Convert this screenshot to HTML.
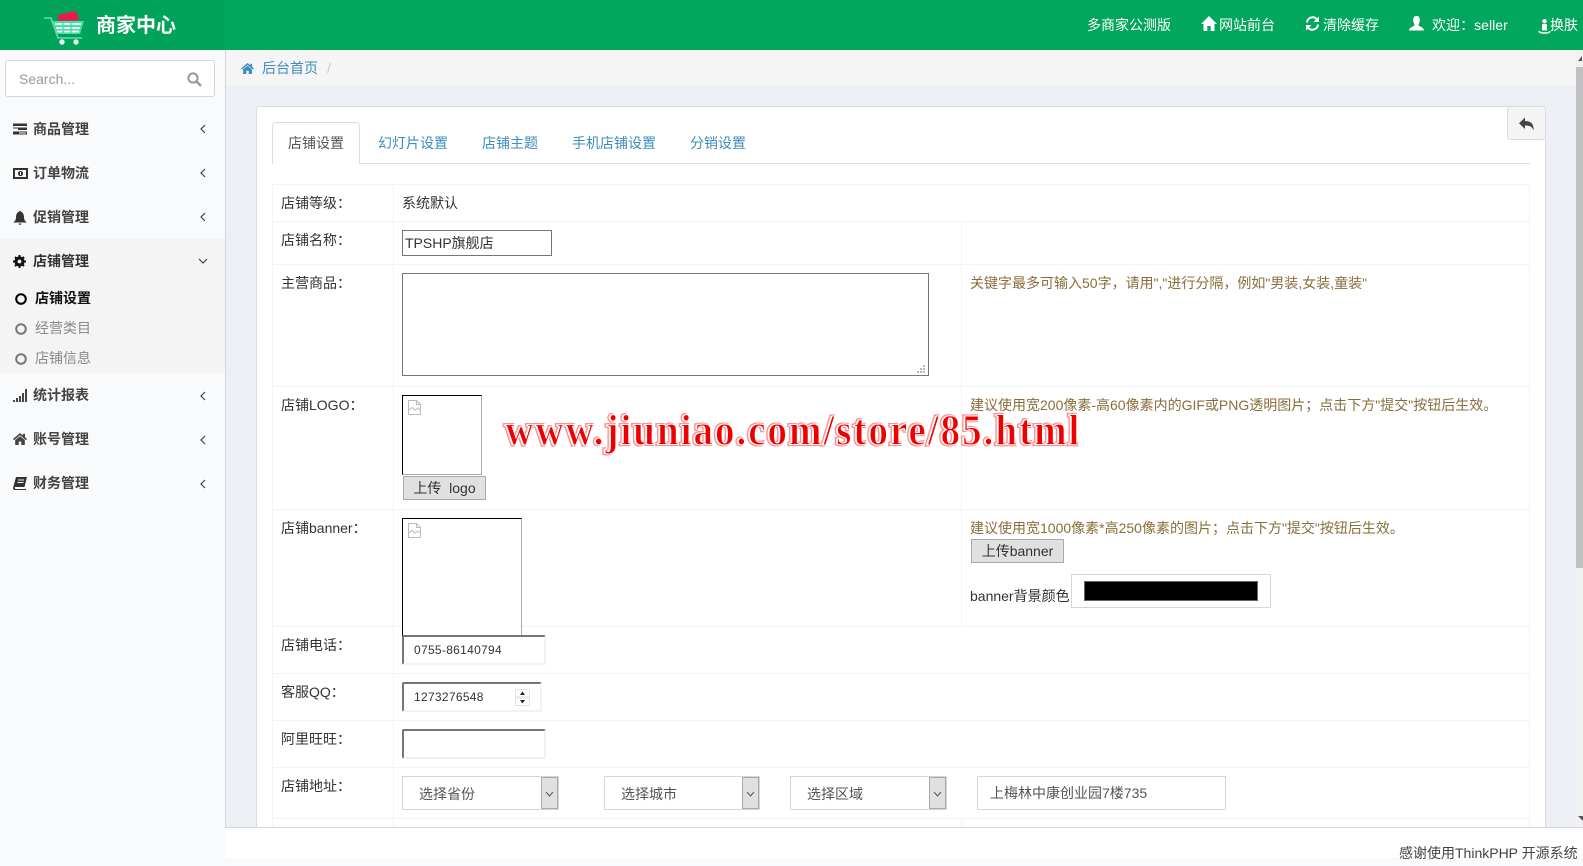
<!DOCTYPE html>
<html lang="zh"><head><meta charset="utf-8"><title>商家中心</title>
<style>
*{box-sizing:border-box}
html,body{margin:0;padding:0;width:1583px;height:866px;overflow:hidden;background:#f9fafc}
body{font:14px/20px "Liberation Sans","Noto Sans CJK SC",sans-serif;color:#333;position:relative}
div,span,svg{position:absolute}
.t{white-space:nowrap;height:20px;line-height:20px}
.m{color:#444;font-weight:bold;left:33px}
.hd{color:#fff}
.hint{color:#8a6d3b;left:970px}
.ln{background:#f4f4f4;height:1px;left:272px;width:1257px}
.vl{background:#f4f4f4;width:1px}
.box{background:#fff;border:1px solid #d2d6de}
.ins{background:#fff;border:2px solid #f2f2f2;border-top-color:#767676;border-left-color:#767676;border-radius:2px}
.btn{background:#e0e0e0;border:1px solid #aaa;color:#333;text-align:center;line-height:22px}
.dd{background:#e0e0e0;border:1px solid #aaa;top:0;bottom:0;right:0;width:17px}
.brk{background:#fff;border:1px solid #aaa;border-top-color:#000;border-left-color:#000}
</style></head><body>

<!-- header -->
<div style="left:0;top:0;width:1583px;height:50px;background:#02a65c"></div>
<div style="left:0;top:0;width:225px;height:50px;background:#01a25a"></div>
<svg style="left:40px;top:8px" width="60" height="38" viewBox="0 0 60 38">
<path d="M18 7 L36 3 L39 12 L19 13Z" fill="#f0184a"/>
<path d="M4 10 H11 L18 30 H42" fill="none" stroke="#5fdcae" stroke-width="1.6"/>
<path d="M11 13 H44 L40 26 H16Z" fill="#55d8a8"/>
<path d="M15 16 H41 M16 20 H40 M17 23.5 H39" stroke="#eafff6" stroke-width="1.8"/>
<path d="M23 14 V26 M31 14 V26" stroke="#55d8a8" stroke-width="1.5"/>
<circle cx="22" cy="34" r="2.7" fill="#eafff6"/><circle cx="36" cy="34" r="2.7" fill="#eafff6"/>
</svg>
<div class="t" style="left:96px;top:16px;font-size:20px;font-weight:bold;color:#fff">商家中心</div>

<div class="t hd" style="left:1087px;top:15px">多商家公测版</div>
<svg style="left:1201px;top:16px" width="16" height="15" viewBox="0 0 16 15"><path d="M8 0 L16 8 H13.5 V15 H9.7 V10 H6.3 V15 H2.5 V8 H0Z" fill="#fff"/></svg>
<div class="t hd" style="left:1219px;top:15px">网站前台</div>
<svg style="left:1305px;top:16px" width="15" height="15" viewBox="0 0 15 15"><path d="M2 6.5 A5.6 5.6 0 0 1 12 3.5 M13 8.5 A5.6 5.6 0 0 1 3 11.5" fill="none" stroke="#fff" stroke-width="2"/><path d="M14 0.5 V6 H8.5Z M1 14.5 V9 H6.5Z" fill="#fff"/></svg>
<div class="t hd" style="left:1323px;top:15px">清除缓存</div>
<svg style="left:1409px;top:16px" width="15" height="15" viewBox="0 0 15 15"><path d="M7.5 0 C10.5 0 11 2.5 10.7 5 C10.5 7 9.8 8 9.4 9 C9.4 10.5 15 11 15 14.5 H0 C0 11 5.6 10.5 5.6 9 C5.2 8 4.5 7 4.3 5 C4 2.5 4.5 0 7.5 0Z" fill="#fff"/></svg>
<div class="t hd" style="left:1432px;top:15px;letter-spacing:.04px">欢迎：seller</div>
<svg style="left:1538px;top:19px" width="13" height="15" viewBox="0 0 13 15"><circle cx="6.5" cy="2.2" r="2.2" fill="#fff"/><path d="M4 5 H9 V11.5 H4Z" fill="#fff"/><path d="M1 12 Q1 14 6.5 14 Q12 14 12 12" fill="none" stroke="#fff" stroke-width="1.6"/></svg>
<div class="t hd" style="left:1550px;top:15px">换肤</div>

<!-- sidebar -->
<div style="left:0;top:50px;width:226px;height:808px;background:#f9fafc;border-right:1px solid #d2d6de"></div>
<div class="box" style="left:5px;top:60px;width:210px;height:37px;border-radius:3px"></div>
<div class="t" style="left:19px;top:69px;color:#999">Search...</div>
<svg style="left:187px;top:72px" width="15" height="15" viewBox="0 0 15 15"><circle cx="6" cy="6" r="4.6" fill="none" stroke="#999" stroke-width="2"/><path d="M9.5 9.5 L14 14" stroke="#999" stroke-width="2.4"/></svg>

<div style="left:0;top:239px;width:225px;height:134px;background:#f4f4f5"></div>

<svg style="left:13px;top:123px" width="14" height="12" viewBox="0 0 14 12"><path d="M0 0.5H14V3H0Z M0 4.5H14V7H5V5.5H0Z M0 8.5H14V11.5H0Z" fill="#333"/><path d="M6 9.5H13V10.5H6Z" fill="#f9fafc"/></svg>
<div class="t m" style="top:119px">商品管理</div>
<svg style="left:13px;top:168px" width="15" height="11" viewBox="0 0 15 11"><path d="M0 0H15V11H0Z" fill="#333"/><path d="M2 2H13V9H2Z" fill="#f9fafc"/><circle cx="7.5" cy="5.5" r="2.6" fill="#333"/><path d="M7 4H8V7H7Z" fill="#f9fafc"/></svg>
<div class="t m" style="top:163px">订单物流</div>
<svg style="left:13px;top:211px" width="14" height="14" viewBox="0 0 14 14"><path d="M7 0 C9.5 1 11 3 11 6 C11 9 12 10 14 11.5 H0 C2 10 3 9 3 6 C3 3 4.5 1 7 0Z M5.5 12.5 H8.5 Q8 14 7 14 Q6 14 5.5 12.5Z" fill="#333"/></svg>
<div class="t m" style="top:207px">促销管理</div>
<svg style="left:13px;top:255px" width="13" height="13" viewBox="0 0 13 13"><circle cx="6.5" cy="6.5" r="3.5" fill="none" stroke="#111" stroke-width="3.2"/><path d="M6.5 0V13M0 6.5H13M2 2L11 11M11 2L2 11" stroke="#111" stroke-width="2" stroke-dasharray="2.2 8.6 2.2"/></svg>
<div class="t m" style="top:251px;color:#333">店铺管理</div>

<svg style="left:15px;top:293px" width="12" height="12"><circle cx="6" cy="6" r="4.8" fill="none" stroke="#000" stroke-width="2"/></svg>
<div class="t" style="left:35px;top:288px;color:#111;font-weight:bold">店铺设置</div>
<svg style="left:15px;top:323px" width="12" height="12"><circle cx="6" cy="6" r="4.8" fill="none" stroke="#777" stroke-width="2"/></svg>
<div class="t" style="left:35px;top:318px;color:#8a8a8a">经营类目</div>
<svg style="left:15px;top:353px" width="12" height="12"><circle cx="6" cy="6" r="4.8" fill="none" stroke="#777" stroke-width="2"/></svg>
<div class="t" style="left:35px;top:348px;color:#8a8a8a">店铺信息</div>

<svg style="left:13px;top:389px" width="14" height="13" viewBox="0 0 14 13"><path d="M0 11H2V13H0Z M3 9H5V13H3Z M6 7H8V13H6Z M9 4H11V13H9Z M12 0H14V13H12Z" fill="#444"/></svg>
<div class="t m" style="top:385px">统计报表</div>
<svg style="left:13px;top:433px" width="14" height="12" viewBox="0 0 14 12"><path d="M7 0 L10 2.5 V0.8 H12 V4.2 L14 6 L13 7.2 L7 2.2 L1 7.2 L0 6Z M2.2 7 L7 3.2 L11.8 7 V12 H8.3 V8.5 H5.7 V12 H2.2Z" fill="#444"/></svg>
<div class="t m" style="top:429px">账号管理</div>
<svg style="left:13px;top:477px" width="14" height="13" viewBox="0 0 14 13"><path d="M3 0H14L11.5 10H2.5Q1.5 10 1.7 11 Q2 12 3 12H12.5L13 11V13H2Q0 13 0 11Z" fill="#333"/><path d="M5 3H11M4.4 5.5H10.5" stroke="#f9fafc"/></svg>
<div class="t m" style="top:473px">财务管理</div>

<svg style="left:200px;top:124px" width="6" height="10"><path d="M5 1L1 5L5 9" fill="none" stroke="#444" stroke-width="1.2"/></svg>
<svg style="left:200px;top:168px" width="6" height="10"><path d="M5 1L1 5L5 9" fill="none" stroke="#444" stroke-width="1.2"/></svg>
<svg style="left:200px;top:212px" width="6" height="10"><path d="M5 1L1 5L5 9" fill="none" stroke="#444" stroke-width="1.2"/></svg>
<svg style="left:198px;top:258px" width="10" height="6"><path d="M1 1L5 5L9 1" fill="none" stroke="#444" stroke-width="1.2"/></svg>
<svg style="left:200px;top:391px" width="6" height="10"><path d="M5 1L1 5L5 9" fill="none" stroke="#444" stroke-width="1.2"/></svg>
<svg style="left:200px;top:435px" width="6" height="10"><path d="M5 1L1 5L5 9" fill="none" stroke="#444" stroke-width="1.2"/></svg>
<svg style="left:200px;top:479px" width="6" height="10"><path d="M5 1L1 5L5 9" fill="none" stroke="#444" stroke-width="1.2"/></svg>

<!-- content -->
<div style="left:226px;top:50px;width:1350px;height:777px;background:#ecf0f5"></div>
<div style="left:226px;top:50px;width:1350px;height:36px;background:#f5f5f5"></div>
<svg style="left:241px;top:63px" width="13" height="11" viewBox="0 0 14 12"><path d="M7 0 L10 2.5 V0.8 H12 V4.2 L14 6 L13 7.2 L7 2.2 L1 7.2 L0 6Z M2.2 7 L7 3.2 L11.8 7 V12 H8.3 V8.5 H5.7 V12 H2.2Z" fill="#3c8dbc"/></svg>
<div class="t" style="left:262px;top:58px;color:#3c8dbc">后台首页</div>
<div class="t" style="left:327px;top:58px;color:#ccc">/</div>

<!-- card -->
<div style="left:256px;top:106px;width:1290px;height:721px;background:#fff;border:1px solid #ddd;border-bottom:0;border-radius:3px 3px 0 0"></div>
<div style="left:272px;top:163px;width:1258px;height:1px;background:#ddd"></div>
<div style="left:272px;top:122px;width:88px;height:42px;background:#fff;border:1px solid #ddd;border-bottom:0;border-radius:4px 4px 0 0"></div>
<div class="t" style="left:288px;top:133px;color:#555">店铺设置</div>
<div class="t" style="left:378px;top:133px;color:#3c8dbc">幻灯片设置</div>
<div class="t" style="left:482px;top:133px;color:#3c8dbc">店铺主题</div>
<div class="t" style="left:572px;top:133px;color:#3c8dbc">手机店铺设置</div>
<div class="t" style="left:690px;top:133px;color:#3c8dbc">分销设置</div>
<div style="left:1507px;top:106px;width:39px;height:34px;background:#f4f4f4;border:1px solid #ddd;border-radius:3px"></div>
<svg style="left:1519px;top:117px" width="15" height="14" viewBox="0 0 15 14"><path d="M6 0.5 V4 C12 4 15 7 14.5 13.5 C13 9.5 11 8.5 6 8.5 V12 L0 6.2Z" fill="#444"/></svg>

<!-- table lines -->
<div class="ln" style="top:184px"></div><div class="ln" style="top:221px"></div><div class="ln" style="top:264px"></div><div class="ln" style="top:386px"></div><div class="ln" style="top:509px"></div><div class="ln" style="top:626px"></div><div class="ln" style="top:673px"></div><div class="ln" style="top:720px"></div><div class="ln" style="top:767px"></div><div class="ln" style="top:818px"></div>
<div class="vl" style="left:272px;top:184px;height:643px"></div>
<div class="vl" style="left:393px;top:184px;height:643px"></div>
<div class="vl" style="left:1529px;top:184px;height:643px"></div>
<div class="vl" style="left:961px;top:221px;height:405px"></div>
<div class="vl" style="left:961px;top:818px;height:9px"></div>

<!-- labels -->
<div class="t" style="left:281px;top:193px">店铺等级：</div>
<div class="t" style="left:402px;top:193px">系统默认</div>
<div class="t" style="left:281px;top:230px">店铺名称：</div>
<div style="left:402px;top:230px;width:150px;height:26px;background:#fff;border:1px solid #767676"></div>
<div class="t" style="left:405px;top:233px">TPSHP旗舰店</div>
<div class="t" style="left:281px;top:273px">主营商品：</div>
<div style="left:402px;top:273px;width:527px;height:103px;background:#fff;border:1px solid #767676"></div>
<svg style="left:917px;top:365px" width="9" height="9"><path d="M6 0h2v2H6Z M3 3h2v2H3Z M6 3h2v2H6Z M0 6h2v2H0Z M3 6h2v2H3Z M6 6h2v2H6Z" fill="#bbb"/></svg>
<div class="t hint" style="top:273px">关键字最多可输入50字，请用","进行分隔，例如"男装,女装,童装"</div>

<div class="t" style="left:281px;top:395px">店铺LOGO：</div>
<div class="brk" style="left:402px;top:395px;width:80px;height:80px"></div>
<svg style="left:408px;top:400px" width="13" height="15" viewBox="0 0 13 15"><path d="M0.5 0.5H8.5L12.5 4.5V14.5H0.5Z M8.5 0.5V4.5H12.5 M1 10L4 7.5L7 10L10 8L12 10" fill="#fff" stroke="#bbb"/></svg>
<div class="btn" style="left:403px;top:476px;width:83px;height:24px">上传&nbsp; logo</div>
<div class="t hint" style="top:395px">建议使用宽200像素-高60像素内的GIF或PNG透明图片；点击下方"提交"按钮后生效。</div>

<div class="t" style="left:281px;top:518px">店铺banner：</div>
<div class="brk" style="left:402px;top:518px;width:120px;height:130px"></div>
<svg style="left:408px;top:523px" width="13" height="15" viewBox="0 0 13 15"><path d="M0.5 0.5H8.5L12.5 4.5V14.5H0.5Z M8.5 0.5V4.5H12.5 M1 10L4 7.5L7 10L10 8L12 10" fill="#fff" stroke="#bbb"/></svg>
<div class="t hint" style="top:518px">建议使用宽1000像素*高250像素的图片；点击下方"提交"按钮后生效。</div>
<div class="btn" style="left:971px;top:539px;width:93px;height:24px">上传banner</div>
<div class="t" style="left:970px;top:586px">banner背景颜色</div>
<div class="box" style="left:1071px;top:574px;width:200px;height:34px"></div>
<div style="left:1084px;top:581px;width:174px;height:20px;background:#000;border:1px solid #666"></div>

<div class="t" style="left:281px;top:635px">店铺电话：</div>
<div class="ins" style="left:402px;top:635px;width:144px;height:30px"></div>
<div class="t" style="left:414px;top:640px;font-size:12px;letter-spacing:.3px">0755-86140794</div>

<div class="t" style="left:281px;top:682px">客服QQ：</div>
<div class="ins" style="left:402px;top:682px;width:140px;height:30px"></div>
<div class="t" style="left:414px;top:687px;font-size:12px;letter-spacing:.3px">1273276548</div>
<svg style="left:515px;top:689px" width="15" height="17" viewBox="0 0 15 17"><rect width="15" height="17" fill="#e6e6e6"/><rect x="1" y="1" width="13" height="6.5" fill="#fff"/><rect x="1" y="9.5" width="13" height="6.5" fill="#fff"/><path d="M7.5 2.5L10 6H5Z M7.5 14.5L5 11H10Z" fill="#222"/></svg>

<div class="t" style="left:281px;top:729px">阿里旺旺：</div>
<div class="ins" style="left:402px;top:729px;width:144px;height:30px"></div>

<div class="t" style="left:281px;top:776px">店铺地址：</div>
<div class="box" style="left:402px;top:776px;width:157px;height:34px"><div class="dd"><svg style="left:3px;top:13px" width="9" height="6"><path d="M1 1L4.5 5L8 1" fill="none" stroke="#555"/></svg></div></div>
<div class="t" style="left:419px;top:784px;color:#555">选择省份</div>
<div class="box" style="left:604px;top:776px;width:156px;height:34px"><div class="dd"><svg style="left:3px;top:13px" width="9" height="6"><path d="M1 1L4.5 5L8 1" fill="none" stroke="#555"/></svg></div></div>
<div class="t" style="left:621px;top:784px;color:#555">选择城市</div>
<div class="box" style="left:790px;top:776px;width:157px;height:34px"><div class="dd"><svg style="left:3px;top:13px" width="9" height="6"><path d="M1 1L4.5 5L8 1" fill="none" stroke="#555"/></svg></div></div>
<div class="t" style="left:807px;top:784px;color:#555">选择区域</div>
<div class="box" style="left:977px;top:776px;width:249px;height:34px"></div>
<div class="t" style="left:990px;top:783px;color:#555">上梅林中康创业园7楼735</div>

<!-- watermark -->
<svg style="left:500px;top:405px;overflow:visible" width="590" height="55">
<g transform="translate(4 39.5) scale(1 1.12)" font-family="Liberation Serif" font-weight="bold" font-size="39">
<text x="0" y="0" textLength="574" lengthAdjust="spacing" fill="#fff" stroke="#ff9090" stroke-width="2.8" paint-order="stroke">www.jiuniao.com/store/85.html</text>
<text x="1.4" y="0" textLength="574" lengthAdjust="spacing" fill="#ee0000" stroke="#fff" stroke-width=".9">www.jiuniao.com/store/85.html</text>
</g>
</svg>

<!-- scrollbar -->
<div style="left:1576px;top:50px;width:7px;height:777px;background:#f1f1f1"></div>
<div style="left:1576px;top:67px;width:7px;height:501px;background:#c1c1c1"></div>
<svg style="left:1578px;top:56px" width="5" height="5"><path d="M4 0V5H0Z" fill="#555"/></svg>
<svg style="left:1578px;top:816px" width="5" height="5"><path d="M0 0H5V5Z" fill="#555"/></svg>

<!-- footer -->
<div style="left:225px;top:827px;width:1358px;height:31px;background:#fff;border-top:1px solid #d2d6de"></div>
<div class="t" style="left:1399px;top:843px;color:#444">感谢使用ThinkPHP 开源系统</div>
</body></html>
